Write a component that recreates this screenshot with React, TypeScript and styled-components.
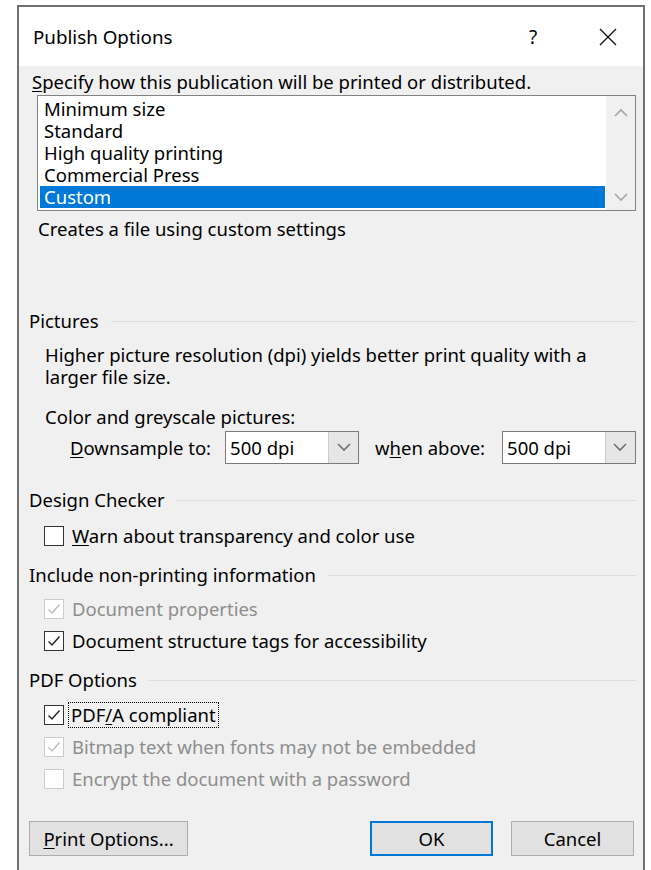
import styled, { createGlobalStyle } from 'styled-components';

const GlobalStyle = createGlobalStyle`
  html, body {
    margin: 0;
    padding: 0;
    background: #ffffff;
  }
  body {
    font-family: "Noto Sans", "Open Sans", sans-serif;
    font-size: 18.5px;
    color: #000;
  }
`;

const Dialog = styled.div`
  margin: 5px 6px 0 17px;
  height: 865px;
  border: 2px solid #707070;
  border-bottom: none;
  box-sizing: border-box;
  display: flex;
  flex-direction: column;
  background: #f0f0f0;
`;

const TitleBar = styled.div`
  height: 59px;
  flex-shrink: 0;
  background: #ffffff;
  display: flex;
  align-items: center;
  padding: 0 0 0 14px;
`;

const Title = styled.div`
  flex: 1;
  font-size: 18.8px;
`;

const TitleButton = styled.div<{ $width: number }>`
  width: ${p => p.$width}px;
  height: 100%;
  display: flex;
  align-items: center;
  justify-content: center;
  font-size: 19px;
`;

const Body = styled.div`
  flex: 1;
  display: flex;
  flex-direction: column;
  padding: 5px 7px 0 10px;
  line-height: 22px;
`;

const Text = styled.div<{ $indent?: number; $top?: number }>`
  margin-left: ${p => p.$indent ?? 0}px;
  margin-top: ${p => p.$top ?? 0}px;
  white-space: nowrap;
`;

const Key = styled.span`
  text-decoration: underline;
  text-underline-offset: 2px;
`;

const ListBox = styled.div`
  margin: 2px 0 0 8px;
  height: 116px;
  border: 1px solid #828282;
  box-sizing: border-box;
  background: #ffffff;
  display: flex;
  padding: 2px 0 0 2px;
`;

const ListItems = styled.div`
  flex: 1;
  display: flex;
  flex-direction: column;
`;

const ListItem = styled.div<{ $selected?: boolean }>`
  height: 22px;
  line-height: 22px;
  padding-left: 4px;
  background: ${p => (p.$selected ? '#0078d7' : 'transparent')};
  color: ${p => (p.$selected ? '#ffffff' : '#000')};
`;

const ScrollBar = styled.div`
  width: 29px;
  margin: -2px 0 0 1px;
  background: #f0f0f0;
  display: flex;
  flex-direction: column;
  justify-content: space-between;
  align-items: center;
  padding: 12px 0 8px;
`;

const SectionHead = styled.div<{ $top: number }>`
  margin-top: ${p => p.$top}px;
  display: flex;
  align-items: center;
  gap: 12px;
  white-space: nowrap;

  &::after {
    content: '';
    flex: 1;
    height: 1px;
    background: #dcdcdc;
  }
`;

const SelectRow = styled.div`
  margin: 3px 0 0 41px;
  display: flex;
  align-items: center;
`;

const SelectLabel = styled.span<{ $before?: number; $after: number }>`
  margin: 0 ${p => p.$after}px 0 ${p => p.$before ?? 0}px;
  white-space: nowrap;
`;

const Select = styled.div`
  width: 134px;
  height: 33px;
  box-sizing: border-box;
  border: 1px solid #7a7a7a;
  background: #ffffff;
  display: flex;
  align-items: center;
`;

const SelectValue = styled.span`
  flex: 1;
  padding-left: 4px;
`;

const SelectButton = styled.div`
  width: 29px;
  height: 100%;
  background: #e6e6e6;
  border-left: 1px solid #cccccc;
  display: flex;
  align-items: center;
  justify-content: center;
`;

const CheckRow = styled.div<{ $top: number; $disabled?: boolean }>`
  margin: ${p => p.$top}px 0 0 15px;
  height: 22px;
  display: flex;
  align-items: center;
  gap: 8px;
  color: ${p => (p.$disabled ? '#8d8d8d' : '#000')};
  white-space: nowrap;
`;

const Box = styled.div<{ $disabled?: boolean }>`
  width: 20px;
  height: 20px;
  box-sizing: border-box;
  border: 1px solid ${p => (p.$disabled ? '#cccccc' : '#333333')};
  background: #ffffff;
  display: flex;
  align-items: center;
  justify-content: center;
`;

const Focus = styled.span`
  outline: 1px dotted #000;
  outline-offset: 1px;
  padding: 0 1px;
  margin-left: -2px;
`;

const ButtonBar = styled.div`
  margin: 31px 2px 0 0;
  display: flex;
  align-items: center;
`;

const Button = styled.button<{ $primary?: boolean; $width: number }>`
  width: ${p => p.$width}px;
  height: 35px;
  box-sizing: border-box;
  background: #e1e1e1;
  border: ${p => (p.$primary ? '2px solid #0078d7' : '1px solid #adadad')};
  font: inherit;
  color: #000;
  padding: 0;
  line-height: 22px;
`;

const Spacer = styled.div`
  flex: 1;
`;

const Chevron = ({ up, color = '#a6a6a6' }: { up?: boolean; color?: string }) => (
  <svg width="14" height="9" viewBox="0 0 14 9">
    <path
      d={up ? 'M1 8 L7 2 L13 8' : 'M1 1 L7 7 L13 1'}
      fill="none"
      stroke={color}
      strokeWidth="1.6"
    />
  </svg>
);

const Check = ({ color }: { color: string }) => (
  <svg width="16" height="16" viewBox="0 0 16 16">
    <path d="M2.5 8.5 L6 12 L13.5 3.5" fill="none" stroke={color} strokeWidth="1.4" />
  </svg>
);

function CheckBox({ checked, disabled }: { checked?: boolean; disabled?: boolean }) {
  return (
    <Box $disabled={disabled}>
      {checked && <Check color={disabled ? '#bdbdbd' : '#222'} />}
    </Box>
  );
}

function DpiSelect({ value }: { value: string }) {
  return (
    <Select>
      <SelectValue>{value}</SelectValue>
      <SelectButton>
        <Chevron color="#707070" />
      </SelectButton>
    </Select>
  );
}

const presets = ['Minimum size', 'Standard', 'High quality printing', 'Commercial Press', 'Custom'];

export default function App() {
  return (
    <>
      <GlobalStyle />
      <Dialog>
        <TitleBar>
          <Title>Publish Options</Title>
          <TitleButton $width={80}>?</TitleButton>
          <TitleButton $width={70}>
            <svg width="18" height="18" viewBox="0 0 18 18">
              <path d="M1 1 L17 17 M17 1 L1 17" stroke="#111" strokeWidth="1.3" />
            </svg>
          </TitleButton>
        </TitleBar>
        <Body>
          <Text $indent={3}>
            <Key>S</Key>pecify how this publication will be printed or distributed.
          </Text>
          <ListBox>
            <ListItems>
              {presets.map(name => (
                <ListItem key={name} $selected={name === 'Custom'}>
                  {name}
                </ListItem>
              ))}
            </ListItems>
            <ScrollBar>
              <Chevron up />
              <Chevron />
            </ScrollBar>
          </ListBox>
          <Text $indent={9} $top={7}>
            Creates a file using custom settings
          </Text>

          <SectionHead $top={70}>Pictures</SectionHead>
          <Text $indent={16} $top={12}>
            Higher picture resolution (dpi) yields better print quality with a
            <br />
            larger file size.
          </Text>
          <Text $indent={16} $top={18}>
            Color and greyscale pictures:
          </Text>
          <SelectRow>
            <SelectLabel $after={14}>
              <Key>D</Key>ownsample to:
            </SelectLabel>
            <DpiSelect value="500 dpi" />
            <SelectLabel $before={16} $after={17}>
              w<Key>h</Key>en above:
            </SelectLabel>
            <DpiSelect value="500 dpi" />
          </SelectRow>

          <SectionHead $top={25}>Design Checker</SectionHead>
          <CheckRow $top={14}>
            <CheckBox />
            <span>
              <Key>W</Key>arn about transparency and color use
            </span>
          </CheckRow>

          <SectionHead $top={17}>Include non-printing information</SectionHead>
          <CheckRow $top={12} $disabled>
            <CheckBox checked disabled />
            <span>Document properties</span>
          </CheckRow>
          <CheckRow $top={10}>
            <CheckBox checked />
            <span>
              Docu<Key>m</Key>ent structure tags for accessibility
            </span>
          </CheckRow>

          <SectionHead $top={17}>PDF Options</SectionHead>
          <CheckRow $top={13}>
            <CheckBox checked />
            <Focus>
              PDF<Key>/</Key>A compliant
            </Focus>
          </CheckRow>
          <CheckRow $top={10} $disabled>
            <CheckBox checked disabled />
            <span>Bitmap text when fonts may not be embedded</span>
          </CheckRow>
          <CheckRow $top={10} $disabled>
            <CheckBox disabled />
            <span>Encrypt the document with a password</span>
          </CheckRow>

          <ButtonBar>
            <Button $width={159}>
              <Key>P</Key>rint Options...
            </Button>
            <Spacer />
            <Button $primary $width={123}>
              OK
            </Button>
            <Button $width={123} style={{ marginLeft: 18 }}>
              Cancel
            </Button>
          </ButtonBar>
        </Body>
      </Dialog>
    </>
  );
}
